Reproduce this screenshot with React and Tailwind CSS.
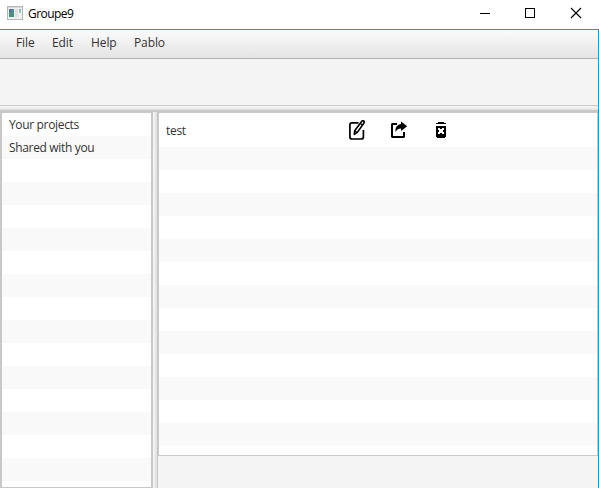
import React from "react";

const MENUS = [
  { label: "File", style: "w-[36px]" },
  { label: "Edit", style: "w-[39px]" },
  { label: "Help", style: "w-[43px]" },
  { label: "Pablo", style: "w-[50px]" },
];

function AppIcon() {
  return (
    <svg className="block h-[14px] w-[16px]" viewBox="0 0 16 14" shapeRendering="crispEdges">
      <rect x="0.5" y="0.5" width="15" height="13" fill="#eef0f0" stroke="#b4b8ba" />
      <rect x="1" y="1" width="14" height="1" fill="#d8dada" />
      <rect x="2" y="3" width="5" height="8" fill="#5c83a0" />
      <rect x="2" y="5" width="5" height="6" fill="#4b9181" />
      <rect x="2" y="3" width="3" height="3" fill="#4a7ba0" />
      <rect x="8" y="3" width="3" height="8" fill="#dfe1e1" />
      <rect x="12" y="3" width="2" height="2" fill="#8fb4cc" />
      <rect x="12" y="5" width="2" height="2" fill="#a5d0aa" />
    </svg>
  );
}

function TitleBar() {
  return (
    <header className="flex h-[29px] shrink-0 items-center bg-white pl-[7px] text-black">
      <div className="mb-[4px]">
        <AppIcon />
      </div>
      <h1 className="ml-[5px] mt-[-1px] grow text-[12px] leading-[16px] tracking-[-0.55px]">Groupe9</h1>
      <svg className="mb-[3px] mr-[17px] block h-[12px] w-[102px]" viewBox="0 0 102 12" fill="none" stroke="#000">
        <path d="M0 6.5H10" shapeRendering="crispEdges" />
        <path d="M45.5 1.5h9v9h-9z" shapeRendering="crispEdges" />
        <path d="M91 1l10 10M101 1L91 11" strokeWidth="1.15" />
      </svg>
    </header>
  );
}

function EditIcon() {
  return (
    <svg className="block h-[20px] w-[18px]" viewBox="0 0 18 20" fill="none" stroke="#000">
      <path d="M9.5 2.9H3Q.9 2.9 .9 5V17Q.9 19 3 19H12.2Q14.4 19 14.4 17V10" strokeWidth="1.7" />
      <path d="M12.6 1.5Q13.7.2 14.7 1Q15.8 1.8 14.8 3.2L8.3 12.4L5.3 14.3L5.7 10.8Z" strokeWidth="1.6" strokeLinejoin="round" fill="#fff" />
      <path d="M11.3 3.4L13.6 5M5.8 11L8.2 12.6" strokeWidth="1.2" />
    </svg>
  );
}

function ShareIcon() {
  return (
    <svg className="block h-[17px] w-[17px]" viewBox="0 0 17 17">
      <path d="M0 3L1 2H6V4H2V15H12V11H14V16L13 17H1L0 16Z" />
      <path d="M10 .4L16.2 5.2L10 10V7.6Q6.5 7.6 4.4 11Q4 3.6 10 2.9Z" />
    </svg>
  );
}

function TrashIcon() {
  return (
    <svg className="block h-[16px] w-[12px]" viewBox="0 0 12 16" shapeRendering="crispEdges">
      <path d="M0 1H2V0H8V1H10V2H0Z" />
      <path d="M0 4H10V15H9V16H1V15H0Z" />
      <path d="M2 6h2v1h2v-1h2v2h-1v2h1v2h-2v-1h-2v1h-2v-2h1v-2h-1z" fill="#fff" />
    </svg>
  );
}

export default function App() {
  return (
    <div className="flex h-[488px] w-[599px] flex-col overflow-hidden bg-white font-['Open_Sans','Noto_Sans',sans-serif] text-[12px] leading-[16px] text-[#333]">
      <TitleBar />
      <div className="flex min-h-0 grow flex-col border-r border-t border-[#08a2d0] bg-[#f4f4f4]">
        <nav className="flex h-[29px] shrink-0 items-center border-b border-[#b5b5b5] bg-linear-to-b from-[#fbfbfb] to-[#e4e4e4] pb-[2px] pl-[16px] tracking-[-0.1px]">
          {MENUS.map((m) => (
            <div key={m.label} className={m.style}>{m.label}</div>
          ))}
        </nav>
        <div className="h-[46px] shrink-0" />
        <div className="h-[5px] shrink-0 border-t border-[#c8c8c8] bg-linear-to-b from-[#f8f8f8] to-[#e2e2e2]" />
        <div className="flex min-h-0 grow">
          <aside className="w-[153px] shrink-0 border-2 border-b border-t-[3px] border-[#c8c8c8] bg-[repeating-linear-gradient(to_bottom,#fff_0px,#fff_23px,#f9f9f9_23px,#f9f9f9_46px)] tracking-[-0.34px]">
            <div className="h-[23px] pl-[7px] pt-[4px]">Your projects</div>
            <div className="h-[23px] pl-[7px] pt-[4px]">Shared with you</div>
          </aside>
          <div className="w-[4px] shrink-0 border-t-2 border-[#c8c8c8] bg-linear-to-r from-[#f8f8f8] to-[#dedede]" />
          <main className="flex grow flex-col border-l-[1px] border-[#c8c8c8]">
            <section className="flex h-[346px] shrink-0 flex-col border border-t-[3px] border-[#c8c8c8]">
              <div className="flex h-[34px] shrink-0 bg-white pl-[7px]">
                <div className="w-[183px] pt-[10px] tracking-[-0.3px]">test</div>
                <div className="w-[42px] pt-[7px]"><EditIcon /></div>
                <div className="w-[45px] pt-[8px]"><ShareIcon /></div>
                <div className="pt-[9px]"><TrashIcon /></div>
              </div>
              <div className="grow bg-[repeating-linear-gradient(to_bottom,#f9f9f9_0px,#f9f9f9_23px,#fff_23px,#fff_46px)]" />
            </section>
          </main>
        </div>
      </div>
    </div>
  );
}
